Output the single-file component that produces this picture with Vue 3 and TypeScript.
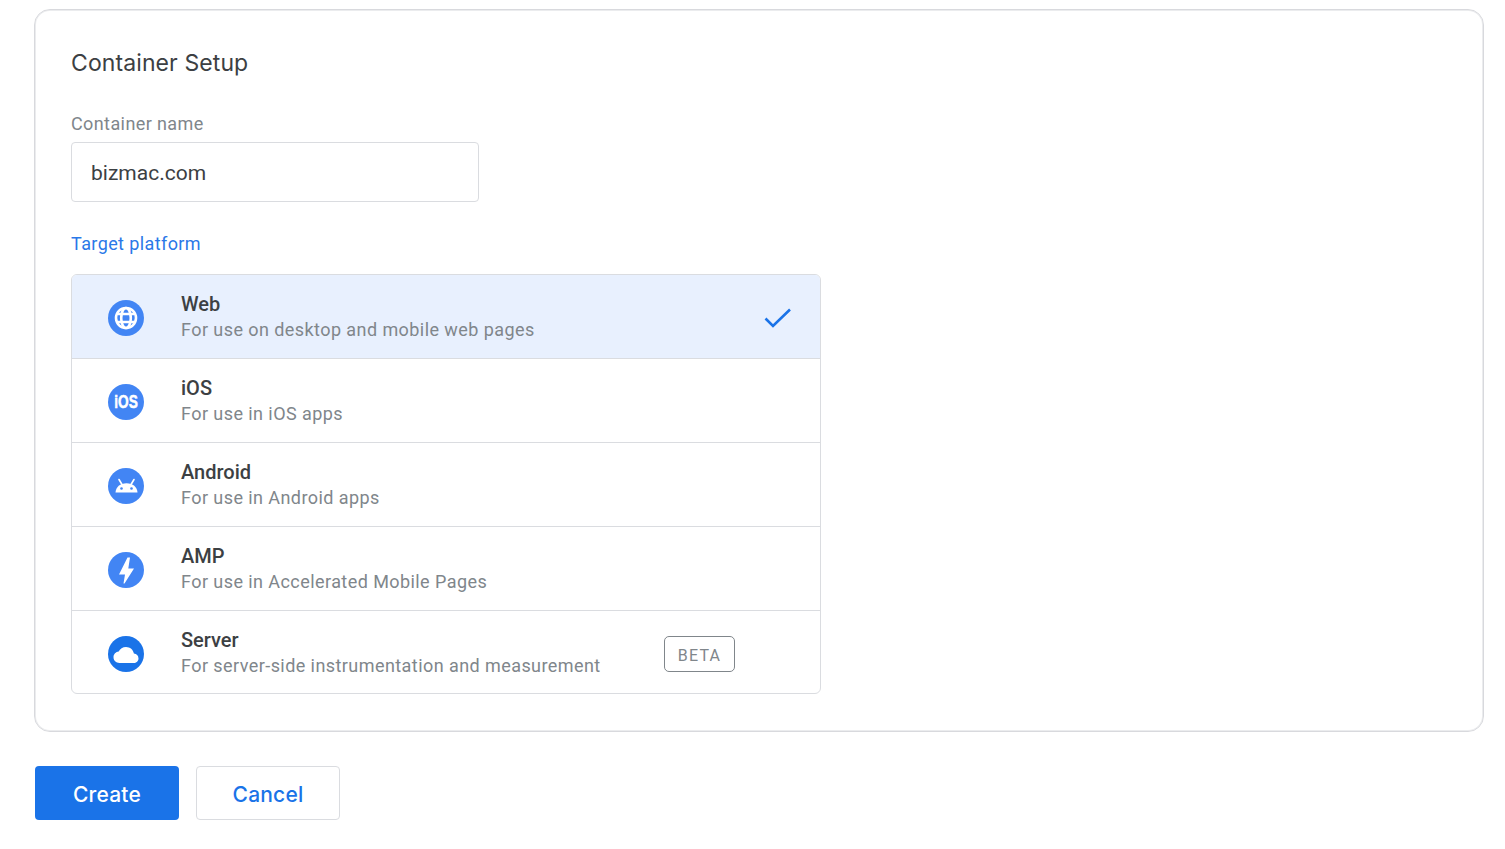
<script setup lang="ts">
import { ref } from 'vue';

interface Platform {
  name: string;
  desc: string;
  icon: string;
  beta?: boolean;
}

const containerName = ref('bizmac.com');
const selected = ref('Web');

const platforms: Platform[] = [
  { name: 'Web', desc: 'For use on desktop and mobile web pages', icon: 'web' },
  { name: 'iOS', desc: 'For use in iOS apps', icon: 'ios' },
  { name: 'Android', desc: 'For use in Android apps', icon: 'android' },
  { name: 'AMP', desc: 'For use in Accelerated Mobile Pages', icon: 'amp' },
  { name: 'Server', desc: 'For server-side instrumentation and measurement', icon: 'server', beta: true }
];
</script>

<template>
  <div class="page">
    <section class="card">
      <h1 class="title">Container Setup</h1>
      <label class="field-label" for="container-name">Container name</label>
      <input id="container-name" v-model="containerName" class="name-input" type="text">
      <div class="target-label">Target platform</div>
      <ul class="platforms">
        <li
          v-for="item in platforms"
          :key="item.name"
          class="platform"
          :class="{ active: selected === item.name }"
          @click="selected = item.name"
        >
          <svg class="platform-icon" width="36" height="36" viewBox="0 0 36 36">
            <circle cx="18" cy="18" r="18" :fill="item.icon === 'server' ? '#1a73e8' : '#4285f4'" />
            <g v-if="item.icon === 'web'" fill="none" stroke="#fff" stroke-width="2.600">
              <circle cx="18" cy="18" r="10" />
              <ellipse cx="18" cy="18" rx="4.800" ry="10" />
              <path d="M9 14h18M9 22h18" />
            </g>
            <text v-else-if="item.icon === 'ios'" class="ios-mark" text-anchor="middle" transform="translate(18 24.300) scale(.76 1)">iOS</text>
            <g v-else-if="item.icon === 'android'" fill="#fff">
              <path d="M7.500 24.500c.3-5.600 4.600-9.300 11-9.300s10.700 3.700 11 9.300h-22Z" />
              <path d="M11 11.500l3 5M26 11.500l-3 5" stroke="#fff" stroke-width="1.600" stroke-linecap="round" />
              <circle cx="13.500" cy="20.500" r="1.300" fill="#4285f4" />
              <circle cx="23.500" cy="20.500" r="1.300" fill="#4285f4" />
            </g>
            <path v-else-if="item.icon === 'amp'" fill="#fff" d="M19.500 5.500H22L20.300 16.500H26L16.500 31.500H15.500L17 22.500H11Z" />
            <path v-else fill="#fff" d="M11.500 27C8 27 5.500 24.500 5.500 21.300c0-3 2.300-5.400 5.200-5.700C12 12.800 14.700 11 18 11c4 0 7.300 2.800 7.900 6.600 2.700.2 4.600 2.300 4.600 4.800 0 2.600-2.100 4.600-4.800 4.600H11.500Z" />
          </svg>
          <div class="platform-text">
            <div class="platform-name">{{ item.name }}</div>
            <div class="platform-desc">{{ item.desc }}</div>
          </div>
          <span v-if="item.beta" class="beta">BETA</span>
          <svg v-if="selected === item.name" class="check" width="28" height="22" viewBox="0 0 28 22">
            <path d="M1.500 11.500 9 19 26 2.500" fill="none" stroke="#1a73e8" stroke-width="2.600" />
          </svg>
        </li>
      </ul>
    </section>
    <div class="actions">
      <button class="btn btn-primary" type="button">Create</button>
      <button class="btn btn-secondary" type="button">Cancel</button>
    </div>
  </div>
</template>

<style scoped>
* {
  box-sizing: border-box;
  margin: 0;
  padding: 0;
}

.page {
  width: 1505px;
  height: 849px;
  padding: 9px 21px 0 34px;
  overflow: hidden;
  background: #fff;
  font-family: Roboto, sans-serif;
}

.card {
  height: 723px;
  padding: 36px 36px 0;
  border: 1px solid #d8d9dd;
  border-radius: 16px;
  box-shadow: inset 0 0 0 1px #ebecee;
  background: #fff;
}

.title {
  font-family: Inter, sans-serif;
  font-size: 23px;
  font-weight: 400;
  line-height: 34px;
  color: #3c4043;
  letter-spacing: 0.1px;
}

.field-label {
  display: block;
  margin-top: 32px;
  font-size: 18px;
  line-height: 24px;
  letter-spacing: 0.4px;
  color: #80868b;
}

.name-input {
  display: block;
  width: 408px;
  height: 60px;
  margin-top: 6px;
  padding: 2px 19px 0;
  border: 1px solid #dadce0;
  border-radius: 4px;
  outline: none;
  font-family: Roboto, sans-serif;
  font-size: 21px;
  color: #3c4043;
}

.target-label {
  margin-top: 30px;
  font-size: 18px;
  line-height: 24px;
  letter-spacing: 0.4px;
  color: #2a78e8;
}

.platforms {
  width: 750px;
  margin-top: 18px;
  border: 1px solid #dadce0;
  border-radius: 6px;
  overflow: hidden;
  list-style: none;
}

.platform {
  display: flex;
  align-items: center;
  height: 84px;
  padding: 0 28px 0 36px;
  border-bottom: 1px solid #dadce0;
  cursor: pointer;
}

.platform:last-child {
  height: 82px;
  padding-top: 2px;
  border-bottom: 0;
}

.platform.active {
  background: #e8f0fe;
}

.platform-icon {
  flex-shrink: 0;
  margin-top: 2px;
}

.ios-mark {
  font-family: "Liberation Sans", sans-serif;
  font-size: 18px;
  font-weight: 700;
  fill: #fff;
  stroke: #fff;
  stroke-width: 0.5px;
}

.platform-text {
  flex: 1;
  margin-left: 37px;
}

.platform-name {
  font-size: 20px;
  font-weight: 500;
  line-height: 24px;
  color: #3c4043;
}

.platform-desc {
  margin-top: 2px;
  font-size: 18px;
  line-height: 24px;
  color: #80868b;
  letter-spacing: 0.43px;
}

.beta {
  width: 71px;
  height: 36px;
  margin-top: 2px;
  margin-right: 57px;
  border: 1px solid #80868b;
  border-radius: 5px;
  font-size: 16px;
  font-weight: 400;
  line-height: 37px;
  text-align: center;
  letter-spacing: 1.2px;
  color: #80868b;
}

.check {
  margin-top: 2px;
}

.actions {
  display: flex;
  gap: 17px;
  margin-top: 34px;
  padding-left: 1px;
}

.btn {
  width: 144px;
  height: 54px;
  padding-top: 2px;
  border-radius: 4px;
  font-family: Inter, sans-serif;
  font-size: 21px;
  font-weight: 500;
  letter-spacing: 0.2px;
  cursor: pointer;
}

.btn-primary {
  border: 0;
  background: #1a73e8;
  color: #fff;
}

.btn-secondary {
  border: 1px solid #dadce0;
  background: #fff;
  color: #1a73e8;
}
</style>
